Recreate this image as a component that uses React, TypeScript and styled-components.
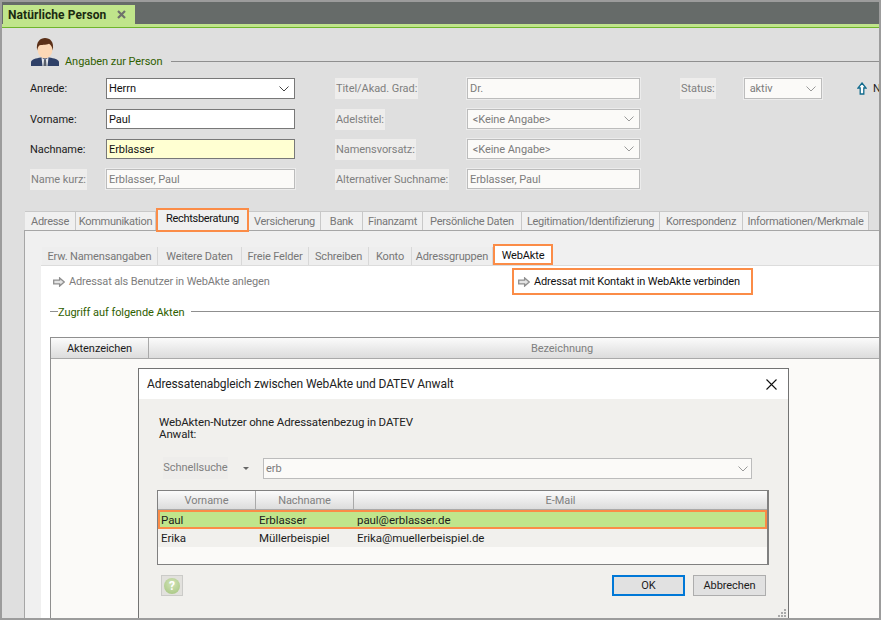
import React from "react";
import styled, { createGlobalStyle } from "styled-components";

const Global = createGlobalStyle`
  html, body { margin: 0; padding: 0; background: #9a9a9a; }
  * { box-sizing: border-box; }
  body { font-family: Roboto, "Liberation Sans", Arial, sans-serif; font-size: 11px; color: #111; letter-spacing: -0.06px; }
`;

const Frame = styled.div`
  position: relative; width: 881px; height: 620px; overflow: hidden;
  border: 2px solid #9c9c9c; background: #dfdfdf;
  display: flex; flex-direction: column;
`;
const TabBar = styled.div`
  height: 22px; flex: none; background: #666b69; padding-left: 1px;
  display: flex; align-items: flex-end;
`;
const DocTab = styled.div`
  width: 132px; height: 19px; background: #c0e58b; padding-left: 5px;
  display: flex; align-items: center; font-size: 12px; font-weight: bold; color: #1b2b10; white-space: nowrap;
  letter-spacing: 0.08px;
`;
const DocClose = styled.svg`
  width: 9px; height: 9px; margin-left: 11px; flex: none;
`;
const GreenBand = styled.div`
  height: 4px; flex: none; background: #c0e58b; border-bottom: 1px solid #6fb52c;
`;
const SectionHead = styled.div`
  margin: 10px 0 12px 29px; height: 28px; display: flex; align-items: flex-end; flex: none;
`;
const PersonIcon = styled.svg`
  width: 28px; height: 28px; flex: none; margin-right: 6px;
`;
const LegendText = styled.span`
  color: #2f6000; line-height: 14px; margin-bottom: -3px; white-space: nowrap;
`;
const SectionLine = styled.div`
  flex: 1; height: 1px; background: #8f8f8f; margin: 0 0 4px 8px;
`;
const Form = styled.div`
  margin-left: 28px; flex: none; display: grid;
  grid-template-columns: 76px 189px 40px 132px 173px 40px 64px 78px 35px 1fr;
  grid-template-rows: 21px 20px 20px 20px; row-gap: 10px; align-items: center;
`;
const Label = styled.span<{ $off?: boolean }>`
  justify-self: start; white-space: nowrap; line-height: 20px; padding: 1px ${p => (p.$off ? "1px" : "0")} 0;
  color: ${p => (p.$off ? "#7f7f7f" : "#1c1c1c")};
  background: ${p => (p.$off ? "#eeedec" : "transparent")};
`;
const Field = styled.div<{ $off?: boolean; $wish?: boolean }>`
  height: 100%; display: flex; align-items: center; justify-content: space-between;
  padding: 0 5px 0 2px; white-space: nowrap;
  border: 1px solid ${p => (p.$off ? "#bcbcbc" : "#787878")};
  outline: 1px solid ${p => (p.$off ? "#ececec" : "transparent")};
  background: ${p => (p.$off ? "#fbfaf8" : p.$wish ? "#ffffd2" : "#fff")};
  color: ${p => (p.$off ? "#7c7c7c" : "#111")};
`;
const Chevron = styled.svg<{ $off?: boolean }>`
  width: 10px; height: 6px; flex: none; fill: none;
  stroke: ${p => (p.$off ? "#9a9a9a" : "#444")}; stroke-width: 1;
`;
const Spacer = styled.span``;
const UpLink = styled.div`
  display: flex; align-items: center; gap: 6px; white-space: nowrap; color: #222;
`;
const UpIcon = styled.svg` width: 10px; height: 13px; flex: none; `;

const MainTabs = styled.div`
  margin: 19px 0 0 23px; height: 22px; flex: none; display: flex; align-items: flex-end;
`;
const MainTab = styled.div<{ $w: number; $on?: boolean }>`
  width: ${p => p.$w}px; flex: none; display: flex; align-items: center; justify-content: center;
  white-space: nowrap; position: relative; letter-spacing: -0.3px;
  height: ${p => (p.$on ? 24 : 19)}px;
  margin-bottom: ${p => (p.$on ? -2 : 0)}px;
  color: ${p => (p.$on ? "#111" : "#777")};
  background: #f0f0f0;
  z-index: ${p => (p.$on ? 1 : 0)};
  border: ${p => (p.$on ? "2px solid #fb8c47" : "1px solid #c8c8c8")};
  ${p => (p.$on ? "padding-bottom: 3px;" : "border-bottom: 0; border-left: 0;")}
`;
const MainPanel = styled.div`
  margin-left: 22px; flex: 1; min-height: 0; background: #f0f0f0;
  border-top: 1px solid #a6a6a6; border-left: 1px solid #a6a6a6;
  padding: 16px 0 0 17px; display: flex; flex-direction: column;
`;
const SubTabs = styled.div`
  height: 18px; flex: none; display: flex; align-items: flex-end;
`;
const SubTab = styled.div<{ $w: number; $on?: boolean }>`
  width: ${p => p.$w}px; flex: none; display: flex; align-items: center; justify-content: center;
  white-space: nowrap; position: relative; padding-top: 1px; letter-spacing: -0.15px;
  height: ${p => (p.$on ? 21 : 18)}px;
  color: ${p => (p.$on ? "#111" : "#777")};
  background: ${p => (p.$on ? "#fff" : "#eeeeee")};
  border-right: ${p => (p.$on ? "0" : "1px solid #d8d8d8")};
  ${p => (p.$on ? "border: 2px solid #fb8c47; z-index: 1;" : "")}
`;
const WhitePanel = styled.div`
  margin-left: -1px; flex: 1; min-height: 0; background: #fff; border-top: 1px solid #dcdcdc;
  display: flex; flex-direction: column;
`;
const ActionRow = styled.div`
  margin: 2px 0 0 12px; height: 27px; flex: none; display: grid;
  grid-template-columns: 459px 241px; align-items: center;
  letter-spacing: -0.14px;
`;
const Action = styled.div<{ $on?: boolean }>`
  height: 100%; display: flex; align-items: center; gap: 4px; white-space: nowrap;
  color: ${p => (p.$on ? "#111" : "#7d7d7d")};
  ${p => (p.$on ? "border: 2px solid #fb8c47; padding-left: 4px;" : "")}
`;
const ArrowIcon = styled.svg` width: 12px; height: 10px; flex: none; `;
const Legend = styled.div`
  margin: 8px 0 0 9px; height: 16px; flex: none; display: flex; align-items: center;
`;
const LegendDash = styled.div` width: 8px; height: 1px; background: #8f8f8f; flex: none; `;
const LegendLabel = styled.span` color: #2f6000; white-space: nowrap; padding-top: 2px; `;
const LegendLine = styled.div` flex: 1; height: 1px; background: #8f8f8f; margin-left: 7px; `;
const FileTable = styled.div`
  margin: 18px 0 0 9px; flex: 1; min-height: 0; background: #fbfaf8;
  border-top: 1px solid #8f8f8f; border-left: 1px solid #8f8f8f;
`;
const HeadRow = styled.div<{ $cols: string; $h: number }>`
  display: grid; grid-template-columns: ${p => p.$cols}; height: ${p => p.$h}px;
`;
const HeadCell = styled.div<{ $off?: boolean; $last?: boolean }>`
  display: flex; align-items: center; justify-content: center; white-space: nowrap;
  background: linear-gradient(#fbfbfb, #dcdcdc);
  border-right: ${p => (p.$last ? "0" : "1px solid #a9a9a9")}; border-bottom: 1px solid #a9a9a9;
  color: ${p => (p.$off ? "#808080" : "#1c1c1c")};
`;

const Dialog = styled.div`
  position: absolute; left: 136px; top: 366px; width: 651px; height: 251px;
  border: 1px solid #737373; background: #f1f0ed; display: flex; flex-direction: column;
`;
const DialogHead = styled.div`
  height: 30px; flex: none; background: #fff; padding: 0 11px 0 8px;
  display: flex; align-items: center; justify-content: space-between;
  color: #222; white-space: nowrap; font-size: 12px; letter-spacing: -0.1px;
`;
const CloseIcon = styled.svg`
  width: 11px; height: 11px; fill: none; stroke: #111; stroke-width: 1.1; flex: none;
`;
const DialogBody = styled.div`
  flex: 1; padding: 17px 0 0 20px; display: flex; flex-direction: column; min-height: 0;
`;
const Intro = styled.div` line-height: 12px; color: #222; flex: none; font-size: 11.5px; letter-spacing: -0.12px; `;
const SearchRow = styled.div`
  margin: 17px 0 0 4px; height: 22px; flex: none; display: flex; align-items: center;
`;
const SearchLabel = styled.span`
  width: 65px; height: 22px; line-height: 22px; background: #eeedeb; color: #808080; text-align: center;
`;
const Caret = styled.div`
  width: 0; height: 0; margin: 0 14px 0 15px; flex: none;
  border-left: 3.5px solid transparent; border-right: 3.5px solid transparent; border-top: 3.5px solid #666;
`;
const SearchBox = styled(Field)`
  width: 489px; height: 21px; margin-top: 1px; outline: 0;
  padding: 0 3px 0 2px;
`;
const PickTable = styled.div`
  margin: 11px 0 0 -2px; width: 612px; height: 75px; flex: none; background: #fbfaf8;
  border: 1px solid #808080; border-right-width: 2px; display: flex; flex-direction: column;
`;
const PickRow = styled.div<{ $on?: boolean }>`
  display: grid; grid-template-columns: 98px 98px 1fr; align-items: center; height: 18px; flex: none;
  background: ${p => (p.$on ? "#c0e58b" : "#f1f0ed")};
  ${p => (p.$on ? "border: 2px solid #fb8c47; height: 19px; padding-left: 1px;" : "padding-left: 3px;")}
  color: #1c1c1c; white-space: nowrap; font-size: 11.5px;
`;
const PickCell = styled.span``;
const Footer = styled.div`
  margin: 10px 0 0 2px; width: 605px; flex: none; display: flex; align-items: flex-start;
`;
const HelpButton = styled.div`
  width: 22px; height: 21px; background: #e2e1dd; border: 1px solid #cbcbc8;
  display: flex; align-items: center; justify-content: center; margin-right: auto;
`;
const HelpIcon = styled.div`
  width: 16px; height: 16px; border-radius: 50%;
  background: radial-gradient(circle at 50% 35%, #d3e4b8, #a2c37c);
  color: #fff; font-weight: bold; font-size: 12px; line-height: 16px; text-align: center;
`;
const DlgButton = styled.div<{ $primary?: boolean }>`
  width: 73px; height: 21px; margin-left: ${p => (p.$primary ? 0 : 8)}px;
  display: flex; align-items: center; justify-content: center;
  background: #e1e1e1; color: #1c1c1c;
  border: ${p => (p.$primary ? "2px solid #0078d7" : "1px solid #adadad")};
`;
const Grip = styled.svg`
  position: absolute; right: 2px; bottom: 1px; width: 9px; height: 9px; fill: #a9a9a9;
`;

const mainTabs: [string, number, boolean?][] = [
  ["Adresse", 51], ["Kommunikation", 80], ["Rechtsberatung", 93, true], ["Versicherung", 72],
  ["Bank", 42], ["Finanzamt", 60], ["Persönliche Daten", 99], ["Legitimation/Identifizierung", 138],
  ["Korrespondenz", 83], ["Informationen/Merkmale", 126],
];
const subTabs: [string, number, boolean?][] = [
  ["Erw. Namensangaben", 116], ["Weitere Daten", 84], ["Freie Felder", 67], ["Schreiben", 60],
  ["Konto", 43], ["Adressgruppen", 81], ["WebAkte", 60, true],
];

const Down = ({ off }: { off?: boolean }) => (
  <Chevron $off={off} viewBox="0 0 10 6"><polyline points="0.5,0.5 5,5 9.5,0.5" /></Chevron>
);
const Arrow = () => (
  <ArrowIcon viewBox="0 0 12 10">
    <path d="M0.7 3.2H6.6V0.9L11.3 5L6.6 9.1V6.8H0.7Z" fill="#e4e4e4" stroke="#8f8f8f" strokeWidth="1.3" />
  </ArrowIcon>
);

export default function App() {
  return (
    <>
      <Global />
      <Frame>
        <TabBar>
          <DocTab>
            Natürliche Person
            <DocClose viewBox="0 0 9 9"><path d="M1 1L8 8M8 1L1 8" stroke="#6f716c" strokeWidth="2.2" /></DocClose>
          </DocTab>
        </TabBar>
        <GreenBand />
        <SectionHead>
          <PersonIcon viewBox="0 0 28 28">
            <path d="M0 28V24.5C0 22 3 20.8 8 19.8L14 19L20 19.8C25 20.8 28 22 28 24.5V28Z" fill="#2f4168" />
            <path d="M10.5 19.5L14 22L17.5 19.5L16.5 28H11.5Z" fill="#e6e9ee" />
            <path d="M13 22H15L15.6 28H12.4Z" fill="#59606c" />
            <ellipse cx="14" cy="11" rx="7.5" ry="9.5" fill="#fcd8b6" />
            <path d="M6.2 12.5C4.6 3.5 9.5 0 14 0C19 0 23.4 3.5 21.8 12.5C21.2 9 20 7 18 5.8C15 7.2 9.8 6.5 8 7.8C7 9 6.6 10.5 6.2 12.5Z" fill="#5b3018" />
          </PersonIcon>
          <LegendText>Angaben zur Person</LegendText>
          <SectionLine />
        </SectionHead>
        <Form>
          <Label>Anrede:</Label>
          <Field>Herrn<Down /></Field>
          <Spacer />
          <Label $off>Titel/Akad. Grad:</Label>
          <Field $off>Dr.</Field>
          <Spacer />
          <Label $off>Status:</Label>
          <Field $off>&nbsp;aktiv<Down off /></Field>
          <Spacer />
          <UpLink>
            <UpIcon viewBox="0 0 10 13">
              <path d="M5 1L9 6H6.8V12H3.2V6H1Z" fill="#fff" stroke="#136c8e" strokeWidth="1.3" />
            </UpIcon>
            N
          </UpLink>

          <Label>Vorname:</Label>
          <Field>Paul</Field>
          <Spacer />
          <Label $off>Adelstitel:</Label>
          <Field $off>&nbsp;&lt;Keine Angabe&gt;<Down off /></Field>
          <Spacer /><Spacer /><Spacer /><Spacer /><Spacer />

          <Label>Nachname:</Label>
          <Field $wish>Erblasser</Field>
          <Spacer />
          <Label $off>Namensvorsatz:</Label>
          <Field $off>&nbsp;&lt;Keine Angabe&gt;<Down off /></Field>
          <Spacer /><Spacer /><Spacer /><Spacer /><Spacer />

          <Label $off>Name kurz:</Label>
          <Field $off>Erblasser, Paul</Field>
          <Spacer />
          <Label $off>Alternativer Suchname:</Label>
          <Field $off>Erblasser, Paul</Field>
        </Form>
        <MainTabs>
          {mainTabs.map(([t, w, on]) => <MainTab key={t} $w={w} $on={on}>{t}</MainTab>)}
        </MainTabs>
        <MainPanel>
          <SubTabs>
            {subTabs.map(([t, w, on]) => <SubTab key={t} $w={w} $on={on}>{t}</SubTab>)}
          </SubTabs>
          <WhitePanel>
            <ActionRow>
              <Action><Arrow />Adressat als Benutzer in WebAkte anlegen</Action>
              <Action $on><Arrow />Adressat mit Kontakt in WebAkte verbinden</Action>
            </ActionRow>
            <Legend>
              <LegendDash />
              <LegendLabel>Zugriff auf folgende Akten</LegendLabel>
              <LegendLine />
            </Legend>
            <FileTable>
              <HeadRow $cols="98px 826px" $h={21}>
                <HeadCell>Aktenzeichen</HeadCell>
                <HeadCell $off $last>Bezeichnung</HeadCell>
              </HeadRow>
            </FileTable>
          </WhitePanel>
        </MainPanel>
        <Dialog>
          <DialogHead>
            Adressatenabgleich zwischen WebAkte und DATEV Anwalt
            <CloseIcon viewBox="0 0 11 11"><path d="M0.5 0.5L10.5 10.5M10.5 0.5L0.5 10.5" /></CloseIcon>
          </DialogHead>
          <DialogBody>
            <Intro>WebAkten-Nutzer ohne Adressatenbezug in DATEV<br />Anwalt:</Intro>
            <SearchRow>
              <SearchLabel>Schnellsuche</SearchLabel>
              <Caret />
              <SearchBox $off>erb<Down off /></SearchBox>
            </SearchRow>
            <PickTable>
              <HeadRow $cols="98px 98px 1fr" $h={19}>
                <HeadCell $off>Vorname</HeadCell>
                <HeadCell $off>Nachname</HeadCell>
                <HeadCell $off $last>E-Mail</HeadCell>
              </HeadRow>
              <PickRow $on>
                <PickCell>Paul</PickCell><PickCell>Erblasser</PickCell><PickCell>paul@erblasser.de</PickCell>
              </PickRow>
              <PickRow>
                <PickCell>Erika</PickCell><PickCell>Müllerbeispiel</PickCell><PickCell>Erika@muellerbeispiel.de</PickCell>
              </PickRow>
            </PickTable>
            <Footer>
              <HelpButton><HelpIcon>?</HelpIcon></HelpButton>
              <DlgButton $primary>OK</DlgButton>
              <DlgButton>Abbrechen</DlgButton>
            </Footer>
          </DialogBody>
          <Grip viewBox="0 0 9 9">
            <rect x="7" y="1" width="2" height="2" /><rect x="4" y="4" width="2" height="2" /><rect x="7" y="4" width="2" height="2" />
            <rect x="1" y="7" width="2" height="2" /><rect x="4" y="7" width="2" height="2" /><rect x="7" y="7" width="2" height="2" />
          </Grip>
        </Dialog>
      </Frame>
    </>
  );
}
